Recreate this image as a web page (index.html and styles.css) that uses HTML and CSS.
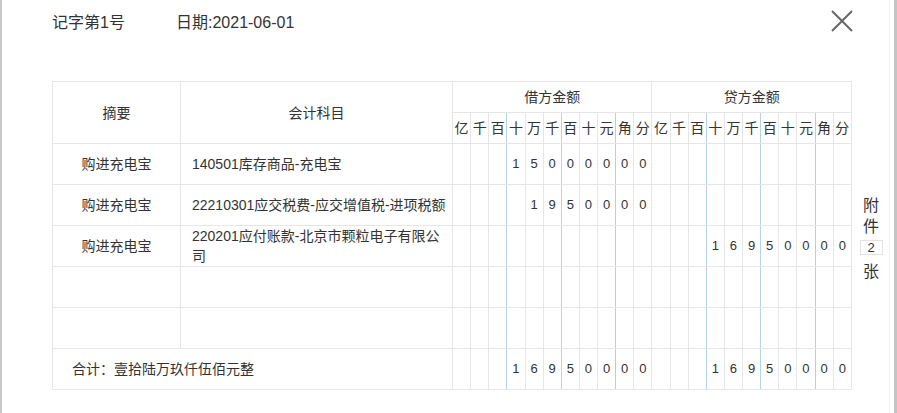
FILE: index.html
```html
<!DOCTYPE html>
<html lang="zh-CN">
<head>
<meta charset="utf-8">
<title>记账凭证</title>
<link rel="stylesheet" href="styles.css">
</head>
<body>
<div class="page">
  <div class="head">
    <span class="voucher-no">记字第1号</span>
    <span class="voucher-date">日期:2021-06-01</span>
    <button class="close" aria-label="关闭">
      <svg width="22" height="22" viewBox="0 0 22 22"><path d="M1 1 L21 21 M21 1 L1 21" stroke="#666" stroke-width="2" fill="none"/></svg>
    </button>
  </div>
  <div class="body">
    <table class="voucher">
      <colgroup>
        <col class="c-summary"><col class="c-account">
        <col><col><col><col><col><col><col><col><col><col><col>
        <col><col><col><col><col><col><col><col><col><col><col>
      </colgroup>
      <thead>
        <tr class="h1">
          <th rowspan="2">摘要</th>
          <th rowspan="2">会计科目</th>
          <th colspan="11">借方金额</th>
          <th colspan="11">贷方金额</th>
        </tr>
        <tr class="h2">
          <th>亿</th><th>千</th><th class="b">百</th><th>十</th><th>万</th><th class="b">千</th><th>百</th><th>十</th><th class="r">元</th><th>角</th><th>分</th>
          <th>亿</th><th>千</th><th class="b">百</th><th>十</th><th>万</th><th class="b">千</th><th>百</th><th>十</th><th class="r">元</th><th>角</th><th>分</th>
        </tr>
      </thead>
      <tbody>
        <tr class="row">
          <td class="summary">购进充电宝</td>
          <td class="account">140501库存商品-充电宝</td>
          <td class="d"></td><td class="d"></td><td class="d b"></td><td class="d">1</td><td class="d">5</td><td class="d b">0</td><td class="d">0</td><td class="d">0</td><td class="d r">0</td><td class="d">0</td><td class="d">0</td>
          <td class="d"></td><td class="d"></td><td class="d b"></td><td class="d"></td><td class="d"></td><td class="d b"></td><td class="d"></td><td class="d"></td><td class="d r"></td><td class="d"></td><td class="d"></td>
        </tr>
        <tr class="row">
          <td class="summary">购进充电宝</td>
          <td class="account">22210301应交税费-应交增值税-进项税额</td>
          <td class="d"></td><td class="d"></td><td class="d b"></td><td class="d"></td><td class="d">1</td><td class="d b">9</td><td class="d">5</td><td class="d">0</td><td class="d r">0</td><td class="d">0</td><td class="d">0</td>
          <td class="d"></td><td class="d"></td><td class="d b"></td><td class="d"></td><td class="d"></td><td class="d b"></td><td class="d"></td><td class="d"></td><td class="d r"></td><td class="d"></td><td class="d"></td>
        </tr>
        <tr class="row">
          <td class="summary">购进充电宝</td>
          <td class="account">220201应付账款-北京市颗粒电子有限公司</td>
          <td class="d"></td><td class="d"></td><td class="d b"></td><td class="d"></td><td class="d"></td><td class="d b"></td><td class="d"></td><td class="d"></td><td class="d r"></td><td class="d"></td><td class="d"></td>
          <td class="d"></td><td class="d"></td><td class="d b"></td><td class="d">1</td><td class="d">6</td><td class="d b">9</td><td class="d">5</td><td class="d">0</td><td class="d r">0</td><td class="d">0</td><td class="d">0</td>
        </tr>
        <tr class="row">
          <td class="summary"></td>
          <td class="account"></td>
          <td class="d"></td><td class="d"></td><td class="d b"></td><td class="d"></td><td class="d"></td><td class="d b"></td><td class="d"></td><td class="d"></td><td class="d r"></td><td class="d"></td><td class="d"></td>
          <td class="d"></td><td class="d"></td><td class="d b"></td><td class="d"></td><td class="d"></td><td class="d b"></td><td class="d"></td><td class="d"></td><td class="d r"></td><td class="d"></td><td class="d"></td>
        </tr>
        <tr class="row">
          <td class="summary"></td>
          <td class="account"></td>
          <td class="d"></td><td class="d"></td><td class="d b"></td><td class="d"></td><td class="d"></td><td class="d b"></td><td class="d"></td><td class="d"></td><td class="d r"></td><td class="d"></td><td class="d"></td>
          <td class="d"></td><td class="d"></td><td class="d b"></td><td class="d"></td><td class="d"></td><td class="d b"></td><td class="d"></td><td class="d"></td><td class="d r"></td><td class="d"></td><td class="d"></td>
        </tr>
        <tr class="row total">
          <td class="total-text" colspan="2">合计：壹拾陆万玖仟伍佰元整</td>
          <td class="d"></td><td class="d"></td><td class="d b"></td><td class="d">1</td><td class="d">6</td><td class="d b">9</td><td class="d">5</td><td class="d">0</td><td class="d r">0</td><td class="d">0</td><td class="d">0</td>
          <td class="d"></td><td class="d"></td><td class="d b"></td><td class="d">1</td><td class="d">6</td><td class="d b">9</td><td class="d">5</td><td class="d">0</td><td class="d r">0</td><td class="d">0</td><td class="d">0</td>
        </tr>
      </tbody>
    </table>
    <div class="attach">
      <span class="attach-ch">附</span>
      <span class="attach-ch">件</span>
      <span class="attach-num">2</span>
      <span class="attach-ch">张</span>
    </div>
  </div>
</div>
</body>
</html>
```

FILE: styles.css
```css
* { box-sizing: border-box; }

html, body {
  margin: 0;
  padding: 0;
  background: #fff;
}

body {
  font-family: "Liberation Sans", "Noto Sans CJK SC", sans-serif;
  color: #333;
}

.page {
  position: relative;
  width: 897px;
  height: 413px;
  border-left: 2px solid #c8c8c8;
  border-right: 3px solid #c4c4c4;
  box-shadow: inset -4px 0 0 #fff, inset -5px 0 0 #f2f2f2;
  overflow: hidden;
}

.head {
  height: 46px;
  padding-left: 50px;
  display: flex;
  align-items: center;
  font-size: 16px;
  line-height: 20px;
}

.voucher-no {
  width: 124px;
}

.close {
  position: absolute;
  top: 10px;
  left: 829px;
  width: 22px;
  height: 22px;
  padding: 0;
  border: 0;
  background: transparent;
  cursor: pointer;
}

.close svg { display: block; }

.body {
  display: flex;
  align-items: center;
  margin-top: 35px;
  padding-left: 50px;
}

.voucher {
  width: 800px;
  table-layout: fixed;
  border-collapse: collapse;
  font-size: 14px;
}

.c-summary { width: 128px; }
.c-account { width: 272px; }

.voucher th,
.voucher td {
  border: 1px solid #e6e6e6;
  padding: 0;
  font-weight: normal;
  text-align: center;
  vertical-align: middle;
}

.voucher .b { border-right-color: #b5d3ea; }
.voucher .r { border-right-color: #e8bcbc; }

.h1 { height: 31px; }
.h2 { height: 31px; }
.row { height: 41px; }

.h1 th, .h2 th { line-height: 20px; }
.h2 th { font-size: 14px; }

.summary { line-height: 20px; }

.voucher td.account {
  text-align: left;
  padding: 0 5px 0 11px;
  line-height: 20px;
}

.voucher td.d {
  font-size: 13px;
  line-height: 20px;
}

.voucher td.total-text {
  text-align: left;
  padding-left: 19px;
  line-height: 20px;
}

.attach {
  width: 38px;
  display: flex;
  flex-direction: column;
  align-items: center;
  font-size: 16px;
  line-height: 21px;
  padding-top: 5px;
}

.attach-num {
  width: 23px;
  height: 15px;
  margin: 3px 0 6px;
  border: 1px solid #e3e3e3;
  font-size: 13px;
  line-height: 13px;
  text-align: center;
}
```
